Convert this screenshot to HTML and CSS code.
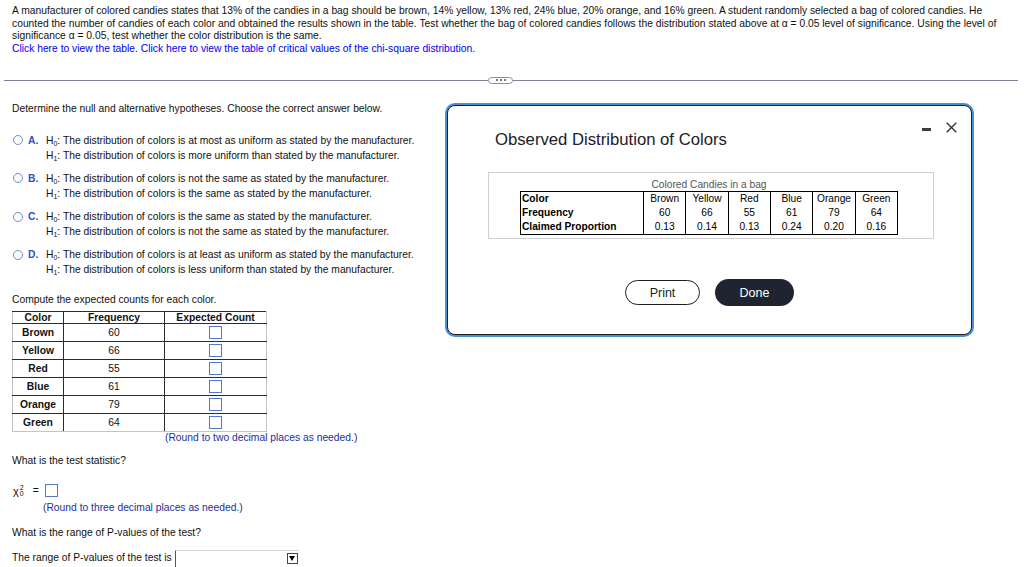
FILE: index.html
```html
<!DOCTYPE html>
<html>
<head>
<meta charset="utf-8">
<title>Chi-square goodness of fit</title>
<link rel="stylesheet" href="styles.css">
</head>
<body>
<div class="problem">
  <p>A manufacturer of colored candies states that 13% of the candies in a bag should be brown, 14% yellow, 13% red, 24% blue, 20% orange, and 16% green. A student randomly selected a bag of colored candies. He counted the number of candies of each color and obtained the results shown in the table. Test whether the bag of colored candies follows the distribution stated above at <span class="alpha">α</span> = 0.05 level of significance. Using the level of significance <span class="alpha">α</span> = 0.05, test whether the color distribution is the same.</p>
  <p class="links"><a href="#">Click here to view the table.</a> <a href="#">Click here to view the table of critical values of the chi-square distribution.</a></p>
</div>

<div class="divider">
  <span class="rule first"></span>
  <span class="handle"><i></i><i></i><i></i></span>
  <span class="rule"></span>
</div>

<div class="work">
  <p class="prompt">Determine the null and alternative hypotheses. Choose the correct answer below.</p>
  <div class="options">
    <div class="option">
      <span class="radio"></span><span class="letter">A.</span>
      <div class="hyp">
        <div>H<sub>0</sub>: The distribution of colors is at most as uniform as stated by the manufacturer.</div>
        <div>H<sub>1</sub>: The distribution of colors is more uniform than stated by the manufacturer.</div>
      </div>
    </div>
    <div class="option">
      <span class="radio"></span><span class="letter">B.</span>
      <div class="hyp">
        <div>H<sub>0</sub>: The distribution of colors is not the same as stated by the manufacturer.</div>
        <div>H<sub>1</sub>: The distribution of colors is the same as stated by the manufacturer.</div>
      </div>
    </div>
    <div class="option">
      <span class="radio"></span><span class="letter">C.</span>
      <div class="hyp">
        <div>H<sub>0</sub>: The distribution of colors is the same as stated by the manufacturer.</div>
        <div>H<sub>1</sub>: The distribution of colors is not the same as stated by the manufacturer.</div>
      </div>
    </div>
    <div class="option">
      <span class="radio"></span><span class="letter">D.</span>
      <div class="hyp">
        <div>H<sub>0</sub>: The distribution of colors is at least as uniform as stated by the manufacturer.</div>
        <div>H<sub>1</sub>: The distribution of colors is less uniform than stated by the manufacturer.</div>
      </div>
    </div>
  </div>

  <p class="compute">Compute the expected counts for each color.</p>
  <table class="counts">
    <tr><th class="c1">Color</th><th class="c2">Frequency</th><th class="c3">Expected Count</th></tr>
    <tr><td class="lab">Brown</td><td>60</td><td><span class="box"></span></td></tr>
    <tr><td class="lab">Yellow</td><td>66</td><td><span class="box"></span></td></tr>
    <tr><td class="lab">Red</td><td>55</td><td><span class="box"></span></td></tr>
    <tr><td class="lab">Blue</td><td>61</td><td><span class="box"></span></td></tr>
    <tr><td class="lab">Orange</td><td>79</td><td><span class="box"></span></td></tr>
    <tr><td class="lab">Green</td><td>64</td><td><span class="box"></span></td></tr>
  </table>
  <p class="note note-two">(Round to two decimal places as needed.)</p>

  <p class="q-stat">What is the test statistic?</p>
  <div class="stat">
    <span class="chi">χ</span><span class="scr"><span>2</span><span>0</span></span>
    <span class="eq">=</span>
    <span class="box"></span>
  </div>
  <p class="note note-three">(Round to three decimal places as needed.)</p>

  <p class="q-range">What is the range of P-values of the test?</p>
  <div class="pv">The range of P-values of the test is<span class="select"><span class="arrow"></span></span></div>
</div>

<div class="dialog">
  <div class="dlg-head">
    <h2 class="dlg-title">Observed Distribution of Colors</h2>
    <div class="win-ctrls">
      <span class="min"></span>
      <svg class="close" width="11" height="11" viewBox="0 0 11 11"><path d="M0.7 0.7 L10.3 10.3 M10.3 0.7 L0.7 10.3" stroke="#2a2d33" stroke-width="1.3" fill="none"/></svg>
    </div>
  </div>
  <div class="data-box">
    <table class="data">
      <caption>Colored Candies in a bag</caption>
      <tr><td class="rl">Color</td><td>Brown</td><td>Yellow</td><td>Red</td><td>Blue</td><td>Orange</td><td>Green</td></tr>
      <tr><td class="rl">Frequency</td><td>60</td><td>66</td><td>55</td><td>61</td><td>79</td><td>64</td></tr>
      <tr><td class="rl">Claimed Proportion</td><td>0.13</td><td>0.14</td><td>0.13</td><td>0.24</td><td>0.20</td><td>0.16</td></tr>
    </table>
  </div>
  <div class="dlg-actions">
    <button class="btn print">Print</button>
    <button class="btn done">Done</button>
  </div>
</div>
</body>
</html>
```

FILE: styles.css
```css
* { box-sizing: border-box; }

html, body {
  margin: 0;
  padding: 0;
}

body {
  position: relative;
  width: 1024px;
  height: 567px;
  overflow: hidden;
  background: #fff;
  color: #111;
  font-family: "Liberation Sans", Arial, Helvetica, sans-serif;
  font-size: 10.3px;
}

p { margin: 0; }

/* ---------- problem statement ---------- */
.problem {
  padding: 5px 0 0 12px;
  width: 1004px;
  line-height: 12.5px;
}

.links a {
  color: #0000ee;
  text-decoration: none;
}

/* ---------- divider ---------- */
.divider {
  display: flex;
  align-items: center;
  width: 1014px;
  height: 8px;
  margin: 21px 0 0 4px;
}

.rule {
  flex: 1;
  height: 0;
  border-top: 1px solid #7a8194;
}

.rule.first { flex: 0 0 484px; }

.handle {
  display: flex;
  align-items: center;
  justify-content: center;
  gap: 2px;
  width: 25px;
  height: 7px;
  border: 1px solid #8a90a0;
  border-radius: 4px;
  background: #fff;
}

.handle i {
  display: block;
  width: 2px;
  height: 2px;
  background: #777;
}

/* ---------- work area ---------- */
.work {
  padding-left: 12px;
  width: 440px;
  line-height: 12.5px;
}

.prompt { margin-top: 19px; }

.options {
  display: flex;
  flex-direction: column;
  gap: 8.3px;
  margin-top: 17px;
}

.option {
  display: flex;
  align-items: flex-start;
  line-height: 15px;
}

.radio {
  flex: 0 0 auto;
  width: 10px;
  height: 10px;
  margin: 2.5px 0 0 1px;
  border: 1px solid #6f8dc8;
  border-radius: 50%;
}

.letter {
  flex: 0 0 18px;
  margin-left: 5px;
  color: #3550c0;
  font-weight: bold;
}

sub {
  font-size: 7px;
  line-height: 0;
  vertical-align: -2px;
}

.compute { margin-top: 17px; }

/* expected counts table */
.counts {
  border-collapse: collapse;
  margin-top: 4px;
  width: 254px;
  table-layout: fixed;
}

.counts th,
.counts td {
  padding: 0;
  border: 1px solid #2b2b2b;
  text-align: center;
  line-height: 11px;
}

.counts th { height: 12px; font-weight: bold; }
.counts td { height: 18px; }

.counts .c1 { width: 51px; }
.counts .c2 { width: 101px; }
.counts .c3 { width: 102px; }

.counts tr > :first-child { border-left-color: #c4c4c4; }
.counts tr > :last-child { border-right-color: #c4c4c4; }
.counts tr:last-child td { border-bottom-color: #c4c4c4; }

.counts .lab { font-weight: bold; }

.box {
  display: inline-block;
  width: 13px;
  height: 13px;
  border: 1px solid #5578cc;
  background: #fff;
  vertical-align: middle;
}

.note { color: #1d2f94; }
.note-two { padding-left: 153px; }

.q-stat { margin-top: 11px; }

.stat {
  display: flex;
  align-items: center;
  height: 14px;
  margin-top: 16px;
  padding-left: 1px;
}

.chi {
  font-size: 11px;
  line-height: 14px;
}

.scr {
  display: inline-flex;
  flex-direction: column;
  margin-left: 1px;
  font-size: 7px;
  line-height: 6px;
}

.eq { margin-left: 9px; }
.stat .box { margin-left: 6px; }

.note-three {
  margin-top: 4px;
  padding-left: 31px;
}

.q-range { margin-top: 12.5px; }

.pv {
  display: flex;
  align-items: flex-start;
  margin-top: 13px;
}

.select {
  display: flex;
  justify-content: flex-end;
  width: 124px;
  height: 18px;
  margin: -2px 0 0 3px;
  border-left: 1px solid #555;
  border-top: 1px solid #d8d8d8;
}

.arrow {
  position: relative;
  width: 11px;
  height: 11px;
  margin: 2px 1px 0 0;
  border: 1px solid #444;
}

.arrow::after {
  content: "";
  position: absolute;
  left: 1.5px;
  top: 2px;
  border-left: 3.5px solid transparent;
  border-right: 3.5px solid transparent;
  border-top: 5px solid #000;
}

/* ---------- dialog window ---------- */
.dialog {
  position: absolute;
  left: 447px;
  top: 105px;
  width: 525px;
  height: 230px;
  display: flex;
  flex-direction: column;
  background: #fff;
  border: 1px solid #1c1f26;
  border-radius: 8px;
  box-shadow: 0 0 0 2px #4a8fd6;
  color: #1d2027;
}

.dlg-head {
  display: flex;
  justify-content: space-between;
  align-items: flex-start;
  padding: 16px 14px 0 47px;
}

.dlg-title {
  margin: 7.5px 0 0;
  font-size: 16.7px;
  font-weight: normal;
  line-height: 20px;
}

.win-ctrls {
  display: flex;
  align-items: center;
  height: 11px;
}

.min {
  display: block;
  width: 9px;
  height: 3px;
  margin: 4px 15px 0 0;
  background: #3b3e45;
}

.close { display: block; }

.data-box {
  width: 446px;
  height: 67px;
  margin: 22.5px 0 0 40px;
  padding: 5px 0 0 31px;
  border: 1px solid #cfcfcf;
}

.data {
  border-collapse: collapse;
  width: 378px;
  table-layout: fixed;
  color: #000;
  border: 1px solid #000;
  font-size: 10.2px;
}

.data caption {
  color: #555;
  line-height: 13px;
}

.data td {
  height: 14.3px;
  padding: 0;
  border-left: 1px solid #000;
  text-align: center;
  line-height: 12px;
}

.data td.rl {
  width: 123px;
  padding-left: 1px;
  text-align: left;
  font-weight: bold;
}

.dlg-actions {
  display: flex;
  justify-content: center;
  align-items: center;
  gap: 15px;
  margin-top: 40px;
}

.btn {
  font-family: "Liberation Sans", Arial, Helvetica, sans-serif;
  font-size: 12.5px;
  cursor: pointer;
}

.print {
  width: 75px;
  height: 25px;
  border: 1px solid #1c1f26;
  border-radius: 13px;
  background: #fff;
  color: #1c1f26;
}

.done {
  width: 79px;
  height: 27px;
  border: 0;
  border-radius: 14px;
  background: #1f2430;
  color: #fff;
}
```
